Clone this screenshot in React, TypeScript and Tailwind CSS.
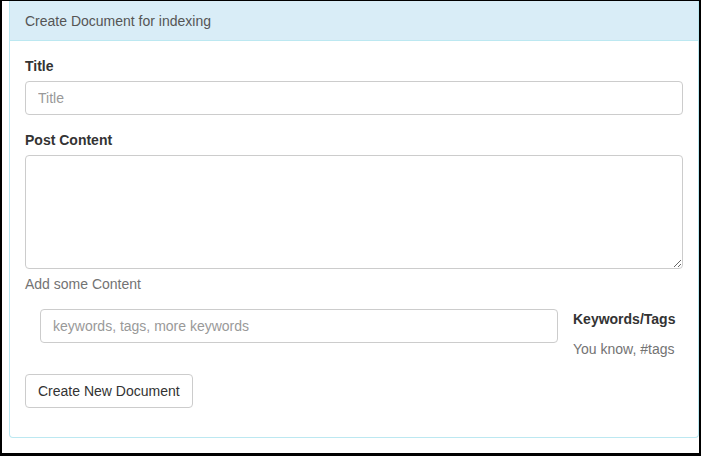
import { useState } from 'react';

export default function App() {
  const [title, setTitle] = useState('');
  const [content, setContent] = useState('');
  const [keywords, setKeywords] = useState('');

  return (
    <div className="bg-black pt-[1px] pl-[2px] pr-[2px] pb-[3px] w-[701px] h-[456px] font-['Liberation_Sans',Arial,sans-serif] text-[14px] text-[#333]">
      <div className="bg-white h-[452px] pl-[7px]">
        {/* Panel */}
        <div className="border border-t-0 border-[#bce8f1] rounded-b-[4px] w-[690px]">
          <div className="bg-[#d9edf7] border-b border-[#bce8f1] h-[40px] flex items-center px-[15px] text-[#555] leading-5">
            Create Document for indexing
          </div>
          <form className="p-[15px] pb-[14px]" onSubmit={(e) => e.preventDefault()}>
            <div className="mb-[15px]">
              <label htmlFor="title" className="block font-bold leading-5 mb-[5px]">
                Title
              </label>
              <input
                id="title"
                type="text"
                placeholder="Title"
                value={title}
                onChange={(e) => setTitle(e.target.value)}
                className="block w-[658px] h-[34px] px-[12px] border border-[#ccc] rounded-[4px] placeholder:text-[#999] outline-none"
              />
            </div>
            <div>
              <label htmlFor="content" className="block font-bold leading-5 mb-[5px]">
                Post Content
              </label>
              <textarea
                id="content"
                value={content}
                onChange={(e) => setContent(e.target.value)}
                className="block w-[658px] h-[114px] px-[12px] py-[6px] border border-[#ccc] rounded-[4px] outline-none"
              />
              <p className="text-[#737373] leading-5 mt-[5px]">Add some Content</p>
            </div>
            <div className="flex mt-[15px] pl-[15px]">
              <input
                type="text"
                placeholder="keywords, tags, more keywords"
                value={keywords}
                onChange={(e) => setKeywords(e.target.value)}
                className="block w-[518px] h-[34px] px-[12px] border border-[#ccc] rounded-[4px] placeholder:text-[#999] outline-none"
              />
              <div className="ml-[15px]">
                <div className="font-bold leading-5">Keywords/Tags</div>
                <div className="text-[#737373] leading-5 mt-[10px]">You know, #tags</div>
              </div>
            </div>
            <button
              type="submit"
              className="mt-[15px] mb-[15px] h-[34px] px-[12px] border border-[#ccc] rounded-[4px] bg-white text-[#333]"
            >
              Create New Document
            </button>
          </form>
        </div>
      </div>
    </div>
  );
}
